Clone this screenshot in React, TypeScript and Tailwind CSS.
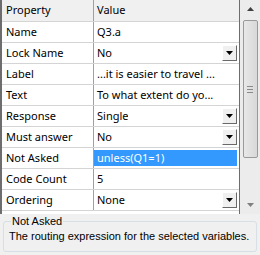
import React from 'react';

type Row = { name: string; value: string; dropdown?: boolean; selected?: boolean };

const rows: Row[] = [
  { name: 'Name', value: 'Q3.a' },
  { name: 'Lock Name', value: 'No', dropdown: true },
  { name: 'Label', value: '...it is easier to travel ...' },
  { name: 'Text', value: 'To what extent do yo...' },
  { name: 'Response', value: 'Single', dropdown: true },
  { name: 'Must answer', value: 'No', dropdown: true },
  { name: 'Not Asked', value: 'unless(Q1=1)', selected: true },
  { name: 'Code Count', value: '5' },
  { name: 'Ordering', value: 'None', dropdown: true },
];

function DropButton() {
  return (
    <div className="absolute right-[2px] top-[2px] w-[15px] h-[16px] bg-[#f0f0f0] border border-t-white border-l-white border-r-[#696969] border-b-[#696969] flex items-center justify-center">
      <svg width="7" height="4" viewBox="0 0 7 4">
        <path d="M0 0h7L3.5 4z" fill="#000" />
      </svg>
    </div>
  );
}

export default function App() {
  return (
    <div className="w-[260px] h-[255px] bg-[#f0f0f0] flex flex-col">
      <div className="flex h-[214px] border-l-2 border-[#6d6d6d]">
        <div className="flex-1 bg-white text-[11px] text-black" style={{ fontFamily: '"Noto Sans", "Liberation Sans", sans-serif' }}>
          <div className="flex h-[22px] bg-[#f0f0f0] border-b border-[#d4d4d4]">
            <div className="w-[92px] pl-[4px] flex items-center border-r border-[#a0a0a0]">Property</div>
            <div className="flex-1 pl-[3px] flex items-center">Value</div>
          </div>
          {rows.map((r) => (
            <div key={r.name} className="flex h-[21px] border-b border-[#d4d4d4]">
              <div className="w-[92px] pl-[4px] flex items-center border-r border-[#a0a0a0]">{r.name}</div>
              <div className="flex-1 relative flex items-center">
                {r.selected ? (
                  <div className="absolute left-0 top-[2px] bottom-[2px] right-[2px] bg-[#3399ff] text-white pl-[3px] flex items-center">{r.value}</div>
                ) : (
                  <span className="pl-[3px] whitespace-nowrap overflow-hidden">{r.value}</span>
                )}
                {r.dropdown && <DropButton />}
              </div>
            </div>
          ))}
        </div>
        <div className="w-[21px] border-l border-[#6d6d6d] bg-[#ececec] flex flex-col items-center">
          <div className="h-[18px] flex items-center justify-center">
            <svg width="7" height="4" viewBox="0 0 7 4"><path d="M3.5 0L7 4H0z" fill="#404040" /></svg>
          </div>
          <div className="w-[15px] h-[138px] mt-[2px] rounded-[2px] border border-[#9a9a9a] bg-gradient-to-r from-[#e8e8e8] to-[#d8d8d8] flex items-center justify-center">
            <div className="flex flex-col gap-[2px]">
              <div className="w-[6px] h-px bg-[#8a8a8a]" />
              <div className="w-[6px] h-px bg-[#8a8a8a]" />
              <div className="w-[6px] h-px bg-[#8a8a8a]" />
            </div>
          </div>
          <div className="flex-1" />
          <div className="h-[18px] flex items-center justify-center">
            <svg width="7" height="4" viewBox="0 0 7 4"><path d="M0 0h7L3.5 4z" fill="#808080" /></svg>
          </div>
        </div>
      </div>
      <div className="flex-1 px-[3px] pt-[7px] pb-[3px]" style={{ fontFamily: '"Liberation Sans", Arial, sans-serif' }}>
        <div className="relative h-full border border-[#d5dfe5] rounded-[3px] text-[11px] text-black px-[5px] pt-[8px]">
          <span className="absolute left-[7px] -top-[6px] bg-[#f0f0f0] px-[1px] leading-[11px]">Not Asked</span>
          <div className="leading-[12px]">The routing expression for the selected variables.</div>
        </div>
      </div>
    </div>
  );
}
